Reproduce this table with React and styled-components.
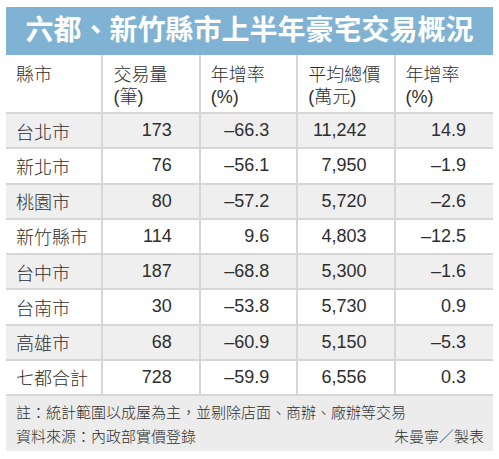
import React from 'react';
import styled, { createGlobalStyle } from 'styled-components';

const rows = [
  ['台北市', '173', '–66.3', '11,242', '14.9'],
  ['新北市', '76', '–56.1', '7,950', '–1.9'],
  ['桃園市', '80', '–57.2', '5,720', '–2.6'],
  ['新竹縣市', '114', '9.6', '4,803', '–12.5'],
  ['台中市', '187', '–68.8', '5,300', '–1.6'],
  ['台南市', '30', '–53.8', '5,730', '0.9'],
  ['高雄市', '68', '–60.9', '5,150', '–5.3'],
  ['七都合計', '728', '–59.9', '6,556', '0.3'],
];

const headers = [
  ['縣市'],
  ['交易量', '(筆)'],
  ['年增率', '(%)'],
  ['平均總價', '(萬元)'],
  ['年增率', '(%)'],
];

const App = () => {
  return (
    <>
      <GlobalStyle />
      <Page>
        <Title>六都、新竹縣市上半年豪宅交易概況</Title>
        <Table>
          {headers.map((lines, i) => (
            <HeadCell key={i} $last={i === headers.length - 1}>
              {lines.map((l) => (
                <div key={l}>{l}</div>
              ))}
            </HeadCell>
          ))}
          {rows.map((row, r) =>
            row.map((value, c) => (
              <Cell
                key={`${r}-${c}`}
                $shaded={r % 2 === 0}
                $numeric={c > 0}
                $last={c === row.length - 1}
              >
                {value}
              </Cell>
            ))
          )}
        </Table>
        <Footer>
          <div>註：統計範圍以成屋為主，並剔除店面、商辦、廠辦等交易</div>
          <FooterLine>
            <span>資料來源：內政部實價登錄</span>
            <span>朱曼寧／製表</span>
          </FooterLine>
        </Footer>
      </Page>
    </>
  );
};

const GlobalStyle = createGlobalStyle`
  body {
    margin: 0;
    background: #ffffff;
    font-family: "Liberation Sans", "Noto Sans CJK TC", sans-serif;
    font-weight: 300;
    color: #2e2e2e;
  }
`;

const Page = styled.div`
  width: 487px;
  padding: 7px 6px 0 6px;
`;

const Title = styled.div`
  height: 48px;
  background: #80b3d3;
  color: #ffffff;
  font-size: 28px;
  font-weight: 700;
  line-height: 48px;
  text-align: center;
`;

const Table = styled.div`
  display: grid;
  grid-template-columns: repeat(5, 1fr);
  grid-template-rows: 59px repeat(8, 35.25px);
`;

const HeadCell = styled.div`
  box-sizing: border-box;
  padding: 9px 0 0 10px;
  font-size: 18px;
  line-height: 22px;
  border-right: ${(p) => (p.$last ? 'none' : '2px solid #d6d6d6')};
  border-bottom: 2px solid #d6d6d6;
`;

const Cell = styled.div`
  box-sizing: border-box;
  display: flex;
  align-items: center;
  justify-content: ${(p) => (p.$numeric ? 'flex-end' : 'flex-start')};
  padding: ${(p) => (p.$numeric ? '0 27px 0 0' : '0 0 0 10px')};
  font-size: 18px;
  background: ${(p) => (p.$shaded ? '#efefef' : '#ffffff')};
  border-right: ${(p) => (p.$last ? 'none' : '2px solid #d6d6d6')};
  border-bottom: 2px solid #d6d6d6;
`;

const Footer = styled.div`
  background: #ececec;
  padding: 5px 9px 2px 10px;
  font-size: 15px;
  line-height: 24px;
`;

const FooterLine = styled.div`
  display: flex;
  justify-content: space-between;
`;

export default App;
